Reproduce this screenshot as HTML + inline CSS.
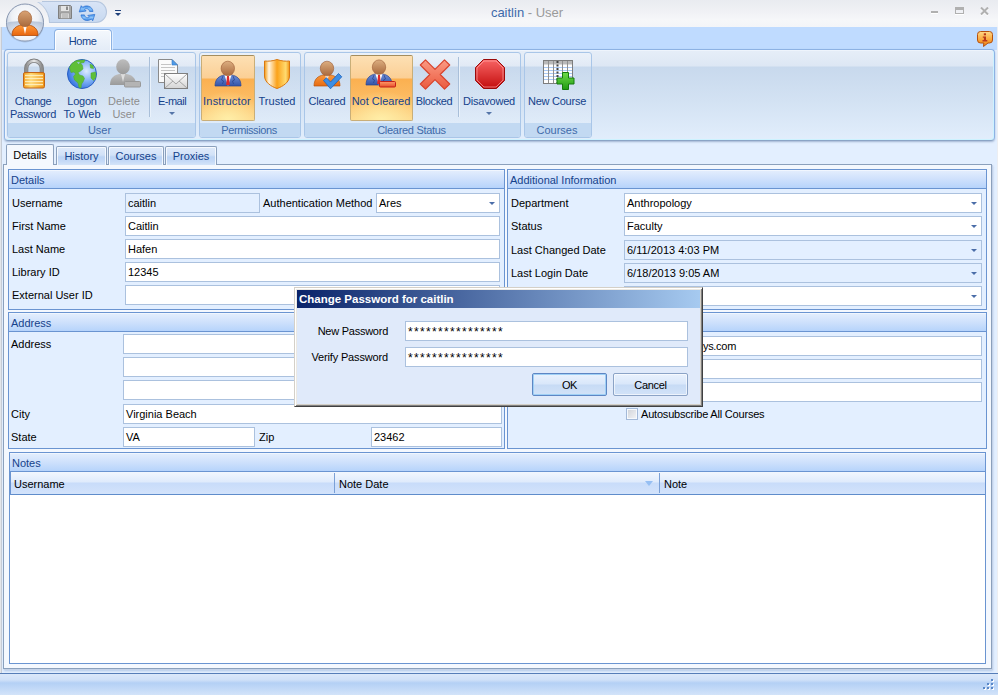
<!DOCTYPE html>
<html>
<head>
<meta charset="utf-8">
<title>caitlin - User</title>
<style>
*{box-sizing:border-box;margin:0;padding:0}
html,body{width:998px;height:695px;overflow:hidden}
body{position:relative;font-family:"Liberation Sans",sans-serif;font-size:11px;color:#000;background:#e3efff}
.a{position:absolute}
.t{position:absolute;white-space:nowrap;line-height:13px}
/* title bar */
#title{left:0;top:0;width:998px;height:27px;background:linear-gradient(#e9ebf0 0,#eff0f4 10px,#f6f7f9 20px,#f3f5f8 27px)}
#tabrow{left:0;top:27px;width:998px;height:23px;background:#bfdbff}
#ribbon{left:4px;top:49px;width:991px;height:92px;border:1px solid #8db2e3;border-bottom-color:#8ba4c6;border-radius:4px;box-shadow:inset -1px -1px 0 #cdf2ff,inset 1px 1px 0 #eef4fc,0 1px 2px rgba(110,135,175,.55);background:linear-gradient(#e6eef8 0,#dde7f4 16px,#c8d9ed 17px,#d3e2f3 51px,#e2eefc 91px)}
.grp{position:absolute;top:52px;height:86px;border:1px solid #a9c6e8;border-radius:3px;background:linear-gradient(rgba(255,255,255,.25) 0,rgba(255,255,255,.12) 13px,rgba(255,255,255,0) 14px,rgba(255,255,255,.12) 70px)}
.grp .cap{position:absolute;left:0;right:0;bottom:0;height:14px;background:#c2d9f2;color:#3e6aaa;text-align:center;line-height:14px;border-radius:0 0 2px 2px}
.rb{position:absolute;text-align:center;color:#15428b;line-height:13px;white-space:nowrap}
.rb.dis{color:#8d8d8d}
.sel{position:absolute;top:55px;height:66px;border:1px solid #c9ae78;border-top-color:#a48d5e;border-radius:2px;background:radial-gradient(ellipse 70% 45% at 50% 100%,rgba(255,240,170,.95),rgba(255,236,160,0) 100%),linear-gradient(#fde0b4 0,#fbcf95 22px,#fbb050 23px,#fcbd66 45px,#fdd88c 66px)}
.sep{position:absolute;top:57px;height:60px;width:1px;background:#a9bfd9;border-right:1px solid #eaf2fb;width:2px}
/* page tabs */
.ptab{position:absolute;top:146px;height:19px;border:1px solid #8ba0bc;border-bottom:none;border-radius:2px 2px 0 0;background:linear-gradient(#dfeafa 0,#d2e2f8 8px,#bcd4f5 10px,#c4d9f7 14px,#d4e4f9 18px);text-align:center;line-height:18px;color:#15428b;box-shadow:inset 1px 1px 0 rgba(255,255,255,.75),inset -1px 0 0 rgba(255,255,255,.75)}
.ptab.on{top:144px;height:21px;background:#f4f8fe;color:#000;line-height:21px;z-index:2;box-shadow:none}
#pane{left:3px;top:164px;width:989px;height:505px;border:1px solid #8ba0bc;background:#f4f8fe;box-shadow:1px 1px 0 #c4d2e8,1px 2px 2px rgba(120,150,200,.45)}
.gb{position:absolute;border:1px solid #6a94d1;background:#e3efff}
.gb .h{position:absolute;left:0;right:0;top:0;height:19px;background:linear-gradient(#fff 0,#e2edfd 1px,#cfe1fc 9px,#b9d5fb 17px,#b4d2fb 18px);border-bottom:1px solid #6a94d1;color:#15428b;line-height:20px;padding-left:2px}
.in{position:absolute;height:20px;border:1px solid #abc1de;background:#fff;line-height:18px;padding-left:2px;white-space:nowrap;overflow:hidden}
.in.ro{background:#e3efff}
.dd:after{content:"";position:absolute;right:4px;top:8px;border:3px solid transparent;border-top:3px solid #4a6da8;border-bottom:none}
.btn{position:absolute;width:75px;height:23px;border:1px solid #8ba3c6;border-radius:2px;background:linear-gradient(#eaf2fd 0,#d9e7fa 10px,#c7dbf5 11px,#d3e3f8 22px);text-align:center;line-height:22px;box-shadow:inset 0 0 0 1px rgba(255,255,255,.6)}
.btn.foc{border-color:#5e86c4;box-shadow:inset 0 0 0 1px #9fd0f5}
.pw{font-size:12px;letter-spacing:1.33px;position:relative;top:.5px}
.lb{position:absolute;white-space:nowrap;line-height:13px}
</style>
</head>
<body>
<div id="title" class="a"></div>
<div id="tabrow" class="a"></div>
<div id="ribbon" class="a"></div>

<!-- title bar contents -->
<div class="a" id="qat" style="left:30px;top:1px;width:77px;height:22px;border:1px solid #b5c6de;border-left:none;border-radius:0 11px 11px 0;background:linear-gradient(#d8e4f6,#c8d9f0)"></div>
<div class="a" style="left:30px;top:1px;width:30px;height:22px;overflow:hidden"><div class="a" style="left:-29.500px;top:-3.500px;width:49px;height:49px;border-radius:50%;border:1px solid #b5c6de;background:linear-gradient(#e9ebf0 2.500px,#eff0f4 12.500px,#f6f7f9 22.500px,#f3f5f8 29.500px)"></div></div><div class="a" style="left:30px;top:0;width:12px;height:2px;background:#e9ebf0"></div>
<svg class="a" style="left:4px;top:2px" width="42" height="42" viewBox="0 0 42 42">
 <defs>
  <radialGradient id="orb" cx="50%" cy="35%" r="65%"><stop offset="0" stop-color="#ffffff"/><stop offset=".55" stop-color="#eef1f6"/><stop offset=".8" stop-color="#cfd8e6"/><stop offset="1" stop-color="#9fb0c9"/></radialGradient>
  <linearGradient id="orbb" x1="0" y1="0" x2="0" y2="1"><stop offset="0" stop-color="#9fb2cd" stop-opacity=".75"/><stop offset=".45" stop-color="#cfd9e8" stop-opacity=".5"/><stop offset="1" stop-color="#fff" stop-opacity="0"/></linearGradient><linearGradient id="skin" x1="0" y1="0" x2="0" y2="1"><stop offset="0" stop-color="#d9a273"/><stop offset="1" stop-color="#a86a3c"/></linearGradient>
  <linearGradient id="orj" x1="0" y1="0" x2="0" y2="1"><stop offset="0" stop-color="#ff9a3a"/><stop offset="1" stop-color="#e8650c"/></linearGradient>
 </defs>
 <circle cx="21" cy="21.5" r="19" fill="#7f8ea8" opacity=".35"/><circle cx="21" cy="20.5" r="18.5" fill="url(#orb)" stroke="#8796b0" stroke-width="1"/>
 <path d="M3.200 20.500 A17.800 17.800 0 0 0 38.800 20.500 C30 18.500 12 18.500 3.200 20.500 Z" fill="url(#orbb)"/><ellipse cx="21" cy="34.500" rx="11" ry="4" fill="#fff" opacity=".8"/>
 <path d="M8 33.500 C8 26 13 24 17 23 L25 23 C29 24 34 26 34 33.500 Z" fill="url(#orj)" stroke="#b04a08" stroke-width=".8"/>
 <path d="M19 23 L21 32 L23 23 Z" fill="#fff"/>
 <ellipse cx="21" cy="16.800" rx="6.700" ry="7.900" fill="url(#skin)" stroke="#a5643a" stroke-width=".7"/>
</svg>
<!-- save icon -->
<svg class="a" style="left:57px;top:4px" width="16" height="16" viewBox="0 0 16 16"><path d="M1.5 1.5h12l1 1v12h-13z" fill="#a9a9a9" stroke="#7f7f7f"/><rect x="4" y="2" width="8" height="5" fill="#e4e4e4"/><rect x="9" y="2.5" width="2" height="3.5" fill="#8a8a8a"/><rect x="3.5" y="9" width="9" height="5.5" fill="#d6d6d6" stroke="#8c8c8c" stroke-width=".6"/><path d="M5 11h6M5 13h6" stroke="#999" stroke-width=".7"/></svg>
<!-- refresh icon -->
<svg class="a" style="left:78px;top:3px" width="18" height="19" viewBox="0 0 18 19"><defs><linearGradient id="rf" x1="0" y1="0" x2="0" y2="1"><stop offset="0" stop-color="#2f7fe0"/><stop offset=".5" stop-color="#8cc4fa"/><stop offset="1" stop-color="#3a8ae6"/></linearGradient></defs><g id="rfa"><path d="M15 8.500 C14.500 3.500 8.500 1.200 4.800 4.300 L3.200 2.700 L1.200 9 L8.200 8 L6.500 6.300 C8.500 5 11 5.800 11.600 8.500 Z" fill="url(#rf)" stroke="#2a6fd0" stroke-width=".7" stroke-linejoin="round"/></g><use href="#rfa" transform="rotate(180 9 10.200)"/></svg>
<!-- qat dropdown -->
<div class="a" style="left:115px;top:10px;width:6px;height:1px;background:#1d3f7a"></div>
<div class="a" style="left:115px;top:13px;border:3px solid transparent;border-top:3.500px solid #1d3f7a;border-bottom:none"></div>
<div class="t" style="left:0;width:1054px;top:4px;text-align:center;font-size:13px;line-height:17px;color:#9a9a9a"><span style="color:#3e6aaa">caitlin</span> - User</div>
<!-- window buttons -->
<div class="a" style="left:931px;top:11px;width:7px;height:2px;background:#b0b0b0;box-shadow:0 1px 0 #fff"></div>
<div class="a" style="left:955px;top:7px;width:9px;height:7px;border:1px solid #b0b0b0;border-top-width:3px;box-shadow:0 1px 0 #fff"></div>
<svg class="a" style="left:980px;top:7px" width="9" height="9" viewBox="0 0 9 9"><path d="M1 1.500 L8 8.500 M8 1.500 L1 8.500" stroke="#fff" stroke-width="2"/><path d="M1 .500 L8 7.500 M8 .500 L1 7.500" stroke="#b0b0b0" stroke-width="2"/></svg>
<!-- Home tab -->
<div class="a" style="left:54px;top:29px;width:58px;height:21px;border:1px solid #8db2e3;border-bottom:none;border-radius:4px 4px 0 0;background:linear-gradient(#f4f8fd,#e4ecf7);box-shadow:inset 1px 1px 0 #fff,inset -1px 0 0 #fff,1px 0 0 rgba(255,255,255,.5)"></div>
<div class="t" style="left:54px;width:57px;top:35px;text-align:center;font-size:11px;color:#15428b;letter-spacing:-.4px">Home</div>
<!-- info icon -->
<svg class="a" style="left:976px;top:30px" width="18" height="18" viewBox="0 0 18 18"><defs><linearGradient id="inf" x1="0" y1="0" x2="0" y2="1"><stop offset="0" stop-color="#ffd98a"/><stop offset=".55" stop-color="#f9a63a"/><stop offset="1" stop-color="#ec7c14"/></linearGradient></defs><path d="M4.500 1.500h9a3 3 0 0 1 3 3v5.500a3 3 0 0 1-3 3h-1.500l-4.500 3.500.3-3.500h-3.300a3 3 0 0 1-3-3v-5.500a3 3 0 0 1 3-3z" fill="url(#inf)" stroke="#b5500e" stroke-width="1"/><rect x="7.800" y="3.300" width="2.200" height="2" fill="#b8381a"/><path d="M6.800 6.500h3.200v3.600h1.300v1.300h-4.800v-1.300h1.400v-2.300h-1.100z" fill="#b8381a"/></svg>
<!-- ribbon groups -->
<div class="grp" style="left:7px;width:189px"><div class="cap" style="padding-right:4px">User</div></div>
<div class="grp" style="left:199px;width:102px"><div class="cap" style="letter-spacing:-.4px;padding-right:2px">Permissions</div></div>
<div class="grp" style="left:304px;width:217px"><div class="cap" style="letter-spacing:-.3px;padding-right:2px">Cleared Status</div></div>
<div class="grp" style="left:524px;width:68px"><div class="cap" style="padding-right:2px">Courses</div></div>
<div class="sel" style="left:201px;width:54px"></div>
<div class="sel" style="left:350px;width:63px"></div>
<div class="sep" style="left:149px"></div>
<div class="sep" style="left:458px"></div>
<div class="rb" style="left:3px;width:60px;top:95px;letter-spacing:-.3px">Change<br>Password</div>
<div class="rb" style="left:52px;width:60px;top:95px"><span style="letter-spacing:-.25px">Logon</span><br>To Web</div>
<div class="rb dis" style="left:94px;width:60px;top:95px">Delete<br>User</div>
<div class="rb" style="left:142px;width:60px;top:95px;letter-spacing:-.5px">E-mail</div>
<div class="rb" style="left:197px;width:60px;top:95px;letter-spacing:.2px">Instructor</div>
<div class="rb" style="left:247px;width:60px;top:95px">Trusted</div>
<div class="rb" style="left:297px;width:60px;top:95px;letter-spacing:-.25px">Cleared</div>
<div class="rb" style="left:346px;width:70px;top:95px">Not Cleared</div>
<div class="rb" style="left:404px;width:60px;top:95px;letter-spacing:-.4px">Blocked</div>
<div class="rb" style="left:459px;width:60px;top:95px;letter-spacing:-.2px">Disavowed</div>
<div class="rb" style="left:522px;width:70px;top:95px;letter-spacing:-.25px">New Course</div>
<div class="a" style="left:169px;top:112px;border:3px solid transparent;border-top:3px solid #5575a8;border-bottom:none"></div>
<div class="a" style="left:486px;top:112px;border:3px solid transparent;border-top:3px solid #5575a8;border-bottom:none"></div>
<svg class="a" style="left:0;top:0" width="998" height="145" viewBox="0 0 998 145">
<defs>
 <linearGradient id="gold" x1="0" y1="0" x2="1" y2="0"><stop offset="0" stop-color="#f09a1a"/><stop offset=".35" stop-color="#ffd66b"/><stop offset="1" stop-color="#ee9210"/></linearGradient>
 <linearGradient id="shk" x1="0" y1="0" x2="1" y2="0"><stop offset="0" stop-color="#8d8d8d"/><stop offset=".5" stop-color="#e9e9e9"/><stop offset="1" stop-color="#8d8d8d"/></linearGradient>
 <radialGradient id="sea" cx="65%" cy="40%" r="70%"><stop offset="0" stop-color="#dcebff"/><stop offset=".5" stop-color="#7fb0f5"/><stop offset="1" stop-color="#2f6fdc"/></radialGradient>
 <linearGradient id="gry" x1="0" y1="0" x2="0" y2="1"><stop offset="0" stop-color="#bdbdbd"/><stop offset="1" stop-color="#9a9a9a"/></linearGradient>
 <linearGradient id="suit" x1="0" y1="0" x2="0" y2="1"><stop offset="0" stop-color="#6f8fd6"/><stop offset="1" stop-color="#3354a8"/></linearGradient>
 <linearGradient id="skn" x1="0" y1="0" x2="0" y2="1"><stop offset="0" stop-color="#dcae80"/><stop offset="1" stop-color="#a9693d"/></linearGradient>
 <linearGradient id="orng" x1="0" y1="0" x2="0" y2="1"><stop offset="0" stop-color="#f99a3e"/><stop offset="1" stop-color="#e76a10"/></linearGradient>
 <linearGradient id="shd" x1="0" y1="0" x2="1" y2="0"><stop offset="0" stop-color="#f39a12"/><stop offset=".18" stop-color="#fff4e0"/><stop offset=".5" stop-color="#fba21a"/><stop offset=".85" stop-color="#ffdb70"/><stop offset="1" stop-color="#f19414"/></linearGradient>
 <linearGradient id="xr" x1="0" y1="0" x2="0" y2="1"><stop offset="0" stop-color="#fb9a84"/><stop offset="1" stop-color="#ea5a3e"/></linearGradient>
 <linearGradient id="stp" x1="0" y1="0" x2="0" y2="1"><stop offset="0" stop-color="#f86464"/><stop offset="1" stop-color="#c30d0d"/></linearGradient>
 <linearGradient id="grn" x1="0" y1="0" x2="0" y2="1"><stop offset="0" stop-color="#6fdc4a"/><stop offset="1" stop-color="#1f9a12"/></linearGradient>
 <linearGradient id="mns" x1="0" y1="0" x2="0" y2="1"><stop offset="0" stop-color="#ff9a6a"/><stop offset="1" stop-color="#e8502a"/></linearGradient>
 <linearGradient id="env" x1="0" y1="0" x2="0" y2="1"><stop offset="0" stop-color="#ffffff"/><stop offset="1" stop-color="#d4d4d4"/></linearGradient>
</defs>
<!-- lock -->
<path d="M26.200 74 V68.500 a7.800 7.800 0 0 1 15.600 0 V74" fill="none" stroke="#7d7d7d" stroke-width="4.200"/>
<path d="M26.200 74 V68.500 a7.800 7.800 0 0 1 15.600 0 V74" fill="none" stroke="url(#shk)" stroke-width="2.600"/>
<rect x="23.500" y="72.500" width="21" height="15.500" rx="1.500" fill="url(#gold)" stroke="#c2661a"/>
<path d="M25 75.500h18M25 78.500h18M25 81.500h18M25 84.500h18" stroke="#fff2c4" stroke-width="1.300" opacity=".9"/>
<!-- globe -->
<circle cx="82" cy="74" r="14.500" fill="url(#sea)" stroke="#2a5fc4" stroke-width="1"/>
<path d="M69.500 68 C70.500 64 74 61 78 60.300 L85 60 L84 62.500 L80.500 63 L82.500 65.500 L83 69 L80 71.500 L78 72.500 L79.500 75 L83 76 L84.500 78.500 L83 82 L81.500 84 L81 88 L79 87.500 L78 83 L74.500 80 L73.500 76.500 L75.500 74 L74 72 L71 72.500 Z" fill="#5fbf38" stroke="#4aa82a" stroke-width=".5"/>
<path d="M90 64 L93 65.500 L93.500 68.500 L90.500 68 Z M91 73 L95.500 72 L96 77 L93.500 80.500 L91 78 Z" fill="#5fbf38" stroke="#4aa82a" stroke-width=".5"/>
<path d="M77 62 l3 .5 -1.500 1.500 z" fill="#9fc8fa"/>
<!-- delete user (disabled) -->
<path d="M110 85 C110 77 115 75 119 74 L127 74 C131 75 136 77 136 85 Z" fill="url(#gry)"/>
<path d="M121 74 L123 82 L125 74 Z" fill="#dedede"/>
<ellipse cx="123" cy="66.800" rx="6.800" ry="7.500" fill="url(#gry)"/>
<rect x="124.5" y="81.500" width="16" height="5.500" rx="1" fill="#b4b4b4" stroke="#999"/>
<!-- e-mail -->
<path d="M158.500 59.500 H172 L177.500 65 V82.500 H158.500 Z" fill="#fafafa" stroke="#8a8a8a"/>
<path d="M172 59.500 L177.500 65 H172 Z" fill="#4f9be8" stroke="#2f78c8" stroke-width=".6"/>
<path d="M161 64.500h10M161 67.500h14M161 70.500h14M161 73.500h4M161 76.500h4" stroke="#c4c4c4" stroke-width="1.2"/>
<rect x="164.500" y="73.500" width="23" height="15" fill="url(#env)" stroke="#7f7f7f"/>
<path d="M165 74 L176 84 L187 74 M165 88 L173 81 M187 88 L179 81" fill="none" stroke="#a5a5a5" stroke-width="1"/>
<!-- instructor -->
<path d="M215 86 C215 78 220 76 224 75 L232 75 C236 76 241 78 241 86 Z" fill="url(#suit)" stroke="#2b4590" stroke-width=".7"/>
<path d="M224.500 75 L228 86 L231.500 75 Z" fill="#fff"/>
<path d="M227 76 h2 l.8 9 h-3.600 z" fill="#e02a2a"/>
<path d="M223 76 l-1.500 4 2 1 -1 3 M233 76 l1.500 4 -2 1 1 3" stroke="#2b4590" stroke-width=".8" fill="none"/>
<ellipse cx="227.800" cy="68.500" rx="6.700" ry="7.300" fill="url(#skn)" stroke="#9a5a35" stroke-width=".6"/>
<!-- shield -->
<path d="M264.500 61 C268 61.500 273 61 277 59.500 C281 61 286 61.500 289.500 61 V76 C289.500 82 283 86.500 277 88.500 C271 86.500 264.500 82 264.500 76 Z" fill="url(#shd)" stroke="#d9780f" stroke-width="1"/>
<!-- cleared -->
<path d="M314 86 C314 78 319 76 323 75 L331 75 C335 76 340 78 340 86 Z" fill="url(#orng)" stroke="#b9540c" stroke-width=".7"/>
<path d="M325 75 L327 82 L329 75 Z" fill="#f4e3d0"/>
<ellipse cx="327" cy="68.500" rx="6.700" ry="7.300" fill="url(#skn)" stroke="#9a5a35" stroke-width=".6"/>
<path d="M323.500 80.500 L326.500 77.800 L330.500 82 L338.500 73.500 L341.800 76.800 L330.500 88.800 Z" fill="#3d8ee4" stroke="#1f62bd" stroke-width=".8"/>
<!-- not cleared -->
<path d="M366 85 C366 77 371 75 375 74 L383 74 C387 75 392 77 392 85 Z" fill="url(#suit)" stroke="#2b4590" stroke-width=".7"/>
<path d="M375.500 74 L379 85 L382.500 74 Z" fill="#fff"/>
<path d="M378 75 h2 l.8 9 h-3.600 z" fill="#e02a2a"/>
<path d="M374 75 l-1.500 4 2 1 -1 3 M384 75 l1.500 4 -2 1 1 3" stroke="#2b4590" stroke-width=".8" fill="none"/>
<ellipse cx="379" cy="67.200" rx="6.700" ry="7.300" fill="url(#skn)" stroke="#9a5a35" stroke-width=".6"/>
<rect x="379.500" y="81.500" width="16" height="5.500" rx="1" fill="url(#mns)" stroke="#c4201a"/>
<!-- blocked X -->
<path d="M425.500 59.800 L435 69.300 L444.500 59.800 L449.700 65 L440.200 74.500 L449.700 84 L444.500 89.200 L435 79.700 L425.500 89.200 L420.300 84 L429.800 74.500 L420.300 65 Z" fill="url(#xr)" stroke="#d8452f" stroke-width="1.2" stroke-linejoin="round"/>
<!-- disavowed -->
<path d="M483.500 59.500 H496.500 L504.500 67.500 V80.500 L496.500 88.500 H483.500 L475.500 80.500 V67.500 Z" fill="url(#stp)" stroke="#9a0a0a" stroke-width="1"/>
<path d="M484 61 H496 L503 68 V80 L496 87 H484 L477 80 V68 Z" fill="none" stroke="#ffb0b0" stroke-width=".8" opacity=".8"/>
<!-- new course -->
<rect x="543.500" y="60.500" width="29" height="23" fill="#fdfdfd" stroke="#7d7d7d"/>
<rect x="544" y="61" width="28" height="3.500" fill="#b9b9b9"/>
<path d="M544 67.500h28M544 70.500h28M544 73.500h28M544 76.500h28M544 79.500h28" stroke="#a8c8f4" stroke-width="1"/>
<path d="M548.500 61v22M553.500 61v22M562.500 61v22M567.500 61v22" stroke="#8f8f8f" stroke-width="1"/>
<path d="M557.500 61v22" stroke="#444" stroke-width="2" stroke-dasharray="2 1.500"/>
<path d="M562.500 72.500 h6 v5.500 h5.500 v6 h-5.500 v5.500 h-6 v-5.500 h-5.500 v-6 h5.500 z" fill="url(#grn)" stroke="#157a0c" stroke-width="1" stroke-linejoin="round"/>
</svg>

<!--PANE-START--><div id="pane" class="a"></div>
<div class="ptab on" style="left:6px;width:48px">Details</div>
<div class="ptab" style="left:56px;width:51px">History</div>
<div class="ptab" style="left:108px;width:56px">Courses</div>
<div class="ptab" style="left:165px;width:52px">Proxies</div>
<div class="gb" style="left:8px;top:169px;width:497px;height:141px"><div class="h">Details</div></div>
<div class="lb" style="left:12px;top:197px">Username</div>
<div class="lb" style="left:12px;top:220px">First Name</div>
<div class="lb" style="left:12px;top:243px">Last Name</div>
<div class="lb" style="left:12px;top:266px">Library ID</div>
<div class="lb" style="left:12px;top:289px">External User ID</div>
<div class="in ro" style="left:125px;top:193px;width:135px">caitlin</div>
<div class="lb" style="left:263px;top:197px">Authentication Method</div>
<div class="in dd" style="left:376px;top:193px;width:124px">Ares</div>
<div class="in" style="left:125px;top:216px;width:375px">Caitlin</div>
<div class="in" style="left:125px;top:239px;width:375px">Hafen</div>
<div class="in" style="left:125px;top:262px;width:375px">12345</div>
<div class="in" style="left:125px;top:285px;width:375px"></div>
<div class="gb" style="left:507px;top:169px;width:480px;height:141px"><div class="h">Additional Information</div></div>
<div class="lb" style="left:511px;top:197px">Department</div>
<div class="lb" style="left:511px;top:220px">Status</div>
<div class="lb" style="left:511px;top:244px">Last Changed Date</div>
<div class="lb" style="left:511px;top:267px">Last Login Date</div>
<div class="in dd" style="left:624px;top:193px;width:358px">Anthropology</div>
<div class="in dd" style="left:624px;top:216px;width:358px">Faculty</div>
<div class="in ro dd" style="left:624px;top:240px;width:358px">6/11/2013 4:03 PM</div>
<div class="in ro dd" style="left:624px;top:263px;width:358px">6/18/2013 9:05 AM</div>
<div class="in dd" style="left:624px;top:286px;width:358px"></div>
<div class="gb" style="left:8px;top:312px;width:497px;height:137px"><div class="h">Address</div></div>
<div class="lb" style="left:11px;top:338px">Address</div>
<div class="in" style="left:123px;top:334px;width:379px"></div>
<div class="in" style="left:123px;top:357px;width:379px"></div>
<div class="in" style="left:123px;top:380px;width:379px"></div>
<div class="lb" style="left:11px;top:408px">City</div>
<div class="in" style="left:123px;top:404px;width:379px">Virginia Beach</div>
<div class="lb" style="left:11px;top:431px">State</div>
<div class="in" style="left:123px;top:427px;width:132px">VA</div>
<div class="lb" style="left:259px;top:431px">Zip</div>
<div class="in" style="left:371px;top:427px;width:131px">23462</div>
<div class="gb" style="left:507px;top:312px;width:480px;height:137px"><div class="h">E-Mail</div></div>
<div class="lb" style="left:511px;top:340px">E-Mail Address</div>
<div class="in" style="left:624px;top:336px;width:358px"><span style="position:absolute;right:245px;letter-spacing:-.3px">caitlin@atlas-sys.com</span></div>
<div class="in" style="left:624px;top:359px;width:358px"></div>
<div class="in" style="left:624px;top:382px;width:358px"></div>
<div class="a" style="left:626px;top:408px;width:12px;height:12px;border:1px solid #a3b9d8;box-shadow:inset 0 0 0 1px #f6f9fd;background:linear-gradient(135deg,#cfd2d8,#f4f5f7)"></div>
<div class="lb" style="left:641px;top:408px"><span style="letter-spacing:-.2px">Autosubscribe All Courses</span></div>
<div class="gb" style="left:9px;top:452px;width:977px;height:212px;background:#fff"><div class="h">Notes</div></div>
<div class="a" style="left:10px;top:472px;width:975px;height:23px;background:linear-gradient(#f2f7fe 0,#dfebfc 10px,#c8dcfa 11px,#d3e3fb 22px);border-bottom:1px solid #5f8ccb;border-left:1px solid #6a94d1"></div>
<div class="a" style="left:334px;top:473px;width:1px;height:20px;background:#7ba0d6"></div><div class="a" style="left:659px;top:473px;width:1px;height:20px;background:#7ba0d6"></div>
<div class="lb" style="left:14px;top:478px">Username</div>
<div class="lb" style="left:339px;top:478px">Note Date</div>
<div class="lb" style="left:664px;top:478px">Note</div>
<div class="a" style="left:645px;top:481px;border:4px solid transparent;border-top:5px solid #96bff3;border-bottom:none"></div>
<div class="a" style="left:0;top:673px;width:998px;height:22px;border-top:1px solid #567db8;background:linear-gradient(#dbe8fa 0,#cfe0f8 6px,#b4d0f5 9px,#c0d8f7 14px,#d3e3f9 21px)"></div>
<div class="a" style="left:984px;top:688px;width:2px;height:2px;background:#fff"></div><div class="a" style="left:983px;top:687px;width:2px;height:2px;background:#5a88c8"></div><div class="a" style="left:988px;top:688px;width:2px;height:2px;background:#fff"></div><div class="a" style="left:987px;top:687px;width:2px;height:2px;background:#5a88c8"></div><div class="a" style="left:992px;top:688px;width:2px;height:2px;background:#fff"></div><div class="a" style="left:991px;top:687px;width:2px;height:2px;background:#5a88c8"></div><div class="a" style="left:988px;top:684px;width:2px;height:2px;background:#fff"></div><div class="a" style="left:987px;top:683px;width:2px;height:2px;background:#5a88c8"></div><div class="a" style="left:992px;top:684px;width:2px;height:2px;background:#fff"></div><div class="a" style="left:991px;top:683px;width:2px;height:2px;background:#5a88c8"></div><div class="a" style="left:992px;top:680px;width:2px;height:2px;background:#fff"></div><div class="a" style="left:991px;top:679px;width:2px;height:2px;background:#5a88c8"></div>
<div class="a" style="left:0;top:27px;width:1px;height:646px;background:#e2e5ea"></div><div class="a" style="left:1px;top:27px;width:1px;height:646px;background:#c6ccd6"></div>
<div class="a" style="left:997px;top:27px;width:1px;height:646px;background:#eceef2"></div>
<!--PANE-END-->
<div class="a" id="dlg" style="left:294px;top:287px;width:409px;height:120px;background:#e0eafa;border:1px solid;border-color:#d4d0c8 #404040 #404040 #d4d0c8;box-shadow:inset 1px 1px 0 #fff,inset -1px -1px 0 #808080,inset 2px 2px 0 #ece9e2,inset -2px -2px 0 #d4d0c8">
 <div class="a" style="left:2px;top:2px;width:403px;height:18px;background:linear-gradient(90deg,#0a246a,#a6caf0)"></div>
 <div class="t" style="left:4px;top:5px;color:#fff;font-weight:bold;font-size:11.5px">Change Password for caitlin</div>
 <div class="t" style="left:0;width:93px;text-align:right;top:37px;letter-spacing:-.25px">New Password</div>
 <div class="t" style="left:0;width:93px;text-align:right;top:63px;letter-spacing:-.15px">Verify Password</div>
 <div class="in" style="left:110px;top:33px;width:283px;height:20px;line-height:19px"><span class="pw">****************</span></div>
 <div class="in" style="left:110px;top:59px;width:283px;height:20px;line-height:19px"><span class="pw">****************</span></div>
 <div class="btn foc" style="left:237px;top:85px;letter-spacing:-.5px">OK</div>
 <div class="btn" style="left:318px;top:85px;letter-spacing:-.3px">Cancel</div>
</div>
</div>

</body>
</html>
